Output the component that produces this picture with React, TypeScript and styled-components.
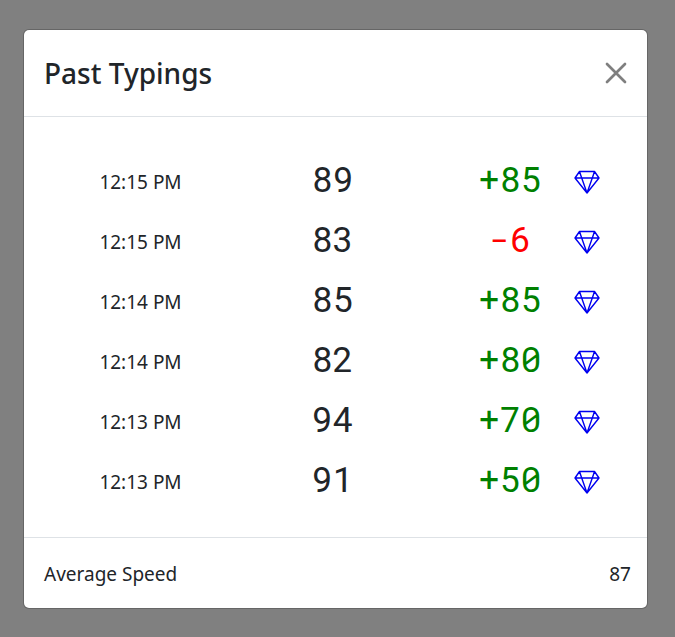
import React from "react";
import styled, { createGlobalStyle } from "styled-components";

const GlobalStyle = createGlobalStyle`
  *, *::before, *::after { box-sizing: border-box; }
  body {
    margin: 0;
    background: #808080;
    color: #212529;
    font-family: "Noto Sans", "Open Sans", sans-serif;
    font-size: 19px;
    line-height: 30px;
  }
`;

const Page = styled.main`
  padding: 29px 27px 28px 23px;
`;

const Dialog = styled.section`
  background: #fff;
  background-clip: padding-box;
  border: 1px solid rgba(0, 0, 0, 0.2);
  border-radius: 6px;
`;

const Header = styled.header`
  display: flex;
  align-items: center;
  justify-content: space-between;
  height: 87px;
  padding: 0 20px;
  border-bottom: 1px solid #dee2e6;
`;

const Title = styled.h1`
  margin: 0;
  font-size: 28px;
  font-weight: 500;
  line-height: 38px;
`;

const CloseButton = styled.button`
  display: flex;
  padding: 0;
  border: 0;
  background: none;
  color: #7f7f7f;
  cursor: pointer;
`;

const Body = styled.div`
  padding: 32px 33px 28px 52px;
`;

const Results = styled.table`
  width: 100%;
  table-layout: fixed;
  border-collapse: collapse;
`;

const TimeColumn = styled.col`
  width: 129px;
`;

const ChangeColumn = styled.col`
  width: 100px;
`;

const IconColumn = styled.col`
  width: 54px;
`;

const Cell = styled.td`
  height: 60px;
  padding: 6px 0 0;
  text-align: center;
  vertical-align: middle;
  white-space: nowrap;

  svg {
    display: block;
    margin: 0 auto;
  }
`;

const NumberCell = styled(Cell)<{ $color?: string }>`
  padding: 0 0 2px;
  color: ${({ $color }) => $color ?? "inherit"};
  font-family: "Roboto Mono", Roboto, monospace;
  font-size: 35px;
`;

const Footer = styled.footer`
  display: flex;
  align-items: center;
  justify-content: space-between;
  height: 71px;
  padding: 2px 16px 0 20px;
  border-top: 1px solid #dee2e6;
`;

const CloseIcon = () => (
  <svg width="22" height="22" viewBox="0 0 22 22" fill="none" stroke="currentColor" strokeWidth="2.7" strokeLinecap="round" aria-hidden="true">
    <path d="M2 2 20 20M20 2 2 20" />
  </svg>
);

const GemIcon = () => (
  <svg width="26" height="24" viewBox="0 0 26 24" fill="none" stroke="#0000f0" strokeWidth="1.4" strokeLinejoin="round" aria-hidden="true">
    <path d="M5.5 1.5h15l4.5 6.5-12 15L1 8zM1 8h24M5.5 1.5l2.2 6.5 5.3 15 5.3-15 2.2-6.5" />
  </svg>
);

const typings = [
  { time: "12:15 PM", speed: 89, change: 85 },
  { time: "12:15 PM", speed: 83, change: -6 },
  { time: "12:14 PM", speed: 85, change: 85 },
  { time: "12:14 PM", speed: 82, change: 80 },
  { time: "12:13 PM", speed: 94, change: 70 },
  { time: "12:13 PM", speed: 91, change: 50 },
];

export default function App() {
  return (
    <>
      <GlobalStyle />
      <Page>
        <Dialog role="dialog" aria-labelledby="dialog-title">
          <Header>
            <Title id="dialog-title">Past Typings</Title>
            <CloseButton type="button" aria-label="Close">
              <CloseIcon />
            </CloseButton>
          </Header>
          <Body>
            <Results aria-labelledby="dialog-title">
              <colgroup>
                <TimeColumn />
                <col />
                <ChangeColumn />
                <IconColumn />
              </colgroup>
              <tbody>
                {typings.map(({ time, speed, change }, index) => (
                  <tr key={index}>
                    <Cell>{time}</Cell>
                    <NumberCell>{speed}</NumberCell>
                    <NumberCell $color={change < 0 ? "#ff0000" : "#008000"}>
                      {change < 0 ? change : `+${change}`}
                    </NumberCell>
                    <Cell>
                      <GemIcon />
                    </Cell>
                  </tr>
                ))}
              </tbody>
            </Results>
          </Body>
          <Footer>
            <span>Average Speed</span>
            <span>87</span>
          </Footer>
        </Dialog>
      </Page>
    </>
  );
}
